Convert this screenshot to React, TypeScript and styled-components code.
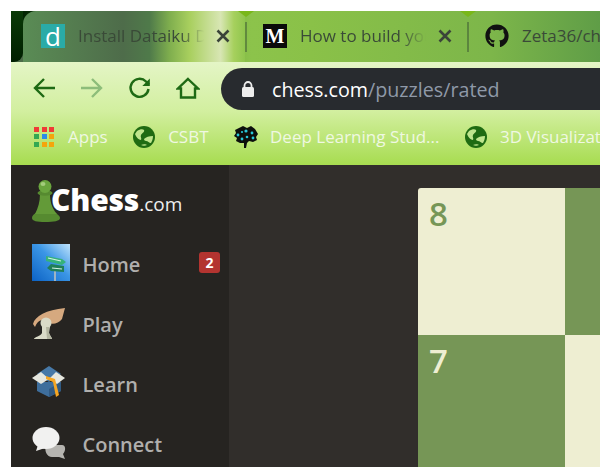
import React, { ReactNode } from 'react';
import styled, { createGlobalStyle } from 'styled-components';
import { FaGithub } from 'react-icons/fa';

const uiFont = `"Open Sans", "Noto Sans", sans-serif`;

const GlobalStyle = createGlobalStyle`
  html, body {
    margin: 0;
    height: 467px;
    overflow: hidden;
    background: #fff;
  }
`;

const Page = styled.div`
  height: 467px;
  box-sizing: border-box;
  padding: 11px 0 0 11px;
  display: flex;
  flex-direction: column;
  overflow: hidden;
  font-family: ${uiFont};
`;

const TabStrip = styled.div`
  height: 51px;
  flex: none;
  display: flex;
  overflow: hidden;
  background: linear-gradient(90deg, #0a3606 0, #022502 12px, #8cc34b 240px, #8ac148 300px, #7db64a 480px, #5f9d47 100%);
`;

const TabEdge = styled.div`
  width: 12px;
  flex: none;
  position: relative;
  background: #4c6b48;

  &::before {
    content: '';
    position: absolute;
    inset: 0;
    background: linear-gradient(180deg, #0a3a07, #001f00);
    border-bottom-right-radius: 9px;
  }
`;

const TabShell = styled.div<{ $active?: boolean; $pad: number }>`
  width: ${(p) => (p.$active ? 222 : 220)}px;
  flex: none;
  box-sizing: border-box;
  padding-left: ${(p) => p.$pad}px;
  display: flex;
  align-items: center;
  border-top-left-radius: ${(p) => (p.$active ? 13 : 0)}px;
  background: ${(p) =>
    p.$active
      ? 'linear-gradient(90deg, #5a8c55 0, #557e50 20%, #4e6c4a 45%, #4f7a4a 57%, #7fae4e 66%, #a8cf5e 75%, #d8e6b4 89%, #a6d05d 95%, #8fc54d 100%)'
      : 'none'};
`;

const TabIconSlot = styled.div`
  width: 24px;
  height: 24px;
  flex: none;
  margin-top: -1px;
`;

const TabLabel = styled.span<{ $fade?: boolean }>`
  width: 126px;
  margin-left: 13px;
  margin-top: -2px;
  flex: none;
  overflow: hidden;
  white-space: nowrap;
  font-size: 17px;
  color: #3a4a38;
  ${(p) => p.$fade && 'mask-image: linear-gradient(90deg, #000 80%, transparent 100%);'}
`;

const CloseIcon = styled.svg`
  width: 14px;
  height: 14px;
  margin-left: 12px;
  flex: none;
  margin-top: -2px;
`;

const TabSeparator = styled.div`
  width: 2px;
  height: 30px;
  margin-top: 11px;
  flex: none;
  position: relative;
  background: rgba(64, 92, 52, 0.55);

  &::before {
    content: '';
    position: absolute;
    top: -11px;
    left: -7px;
    border-left: 8px solid transparent;
    border-right: 8px solid transparent;
    border-top: 6px solid #79b71a;
  }
`;

const DFavicon = styled.div`
  width: 24px;
  height: 24px;
  display: flex;
  align-items: center;
  justify-content: center;
  background: #2aaba7;
  color: #fff;
  font-size: 26px;
  font-weight: 500;
  line-height: 24px;
`;

const MFavicon = styled.div`
  width: 24px;
  height: 24px;
  display: flex;
  align-items: center;
  justify-content: center;
  background: #0a0a0a;
  color: #fff;
  font-family: 'Liberation Serif', serif;
  font-weight: 700;
  font-size: 20px;
`;

const GithubFavicon = styled(FaGithub)`
  width: 24px;
  height: 24px;
  display: block;
  color: #111;
`;

const BrowserBars = styled.div`
  flex: none;
  background: linear-gradient(180deg, #e4f5c6 0, #d2ef9f 48%, #a7dc50 100%);
`;

const Toolbar = styled.div`
  height: 48px;
  box-sizing: border-box;
  padding: 6px 0 0 21px;
  display: flex;
  align-items: center;
  gap: 24px;
`;

const NavSvg = styled.svg<{ $faded?: boolean }>`
  width: 24px;
  height: 24px;
  margin-top: -2px;
  flex: none;
  fill: none;
  stroke: ${(p) => (p.$faded ? '#8dbd7a' : '#1e6a14')};
  stroke-width: 2.4;
`;

const Omnibox = styled.div`
  flex: 1;
  height: 42px;
  margin-left: -3px;
  padding-left: 20px;
  display: flex;
  align-items: center;
  background: #282b2f;
  border-radius: 21px 0 0 21px;
  font-size: 19.7px;
  white-space: nowrap;
`;

const LockIcon = styled.svg`
  width: 14px;
  height: 18px;
  margin-right: 17px;
  flex: none;
`;

const Host = styled.span`
  color: #fff;
`;

const UrlPath = styled.span`
  color: #8f99a8;
`;

const BookmarksBar = styled.div`
  height: 53px;
  padding: 0 0 2px 23px;
  display: flex;
  align-items: center;
  gap: 25.5px;
  white-space: nowrap;
  overflow: hidden;
`;

const Bookmark = styled.div<{ $gap: number }>`
  display: flex;
  align-items: center;
  gap: ${(p) => p.$gap}px;
  flex: none;
  font-size: 17px;
  line-height: 22px;
  color: #eff8e2;
`;

const AppsGrid = styled.div`
  width: 20px;
  display: grid;
  grid-template-columns: repeat(3, 5px);
  gap: 2.5px;
`;

const AppsDot = styled.span<{ $color: string }>`
  width: 5px;
  height: 5px;
  background: ${(p) => p.$color};
`;

const Body = styled.div`
  flex: 1;
  min-height: 0;
  display: flex;
`;

const Sidebar = styled.nav`
  width: 218px;
  flex: none;
  background: #262421;
`;

const Logo = styled.div`
  height: 70px;
  box-sizing: border-box;
  padding: 15px 0 0 21px;
  display: flex;
  align-items: flex-start;
`;

const Pawn = styled.svg`
  width: 28px;
  height: 42px;
  flex: none;
`;

const LogoText = styled.div`
  margin: 1px 0 0 -9px;
  font-size: 30px;
  font-weight: 800;
  line-height: 38px;
  letter-spacing: -0.2px;
  color: #fff;
`;

const LogoSuffix = styled.span`
  font-size: 19px;
  font-weight: 400;
  letter-spacing: 0;
  color: #eee;
`;

const NavRow = styled.div`
  height: 60px;
  padding-left: 21px;
  display: flex;
  align-items: center;
`;

const NavIcon = styled.svg`
  width: 38px;
  height: 38px;
  margin-bottom: 5px;
  flex: none;
`;

const NavLabel = styled.span`
  margin: -2px 0 0 12.5px;
  font-size: 20px;
  font-weight: 600;
  color: #b0afad;
`;

const Badge = styled.span`
  width: 21px;
  height: 21px;
  margin: 0 9px 5px auto;
  display: flex;
  align-items: center;
  justify-content: center;
  border-radius: 3px;
  background: #b33430;
  color: #fff;
  font-size: 14px;
  font-weight: 700;
`;

const Main = styled.main`
  flex: 1;
  min-width: 0;
  overflow: hidden;
  padding: 23px 0 0 189px;
  background: #312e2b;
`;

const Board = styled.div`
  width: 1176px;
  display: grid;
  grid-template-columns: repeat(8, 147px);
  grid-auto-rows: 147px;
  border-top-left-radius: 3px;
  overflow: hidden;
`;

const Square = styled.div<{ $dark: boolean }>`
  box-sizing: border-box;
  padding: 4px 0 0 11px;
  font-size: 33px;
  font-weight: 600;
  line-height: 44px;
  background: ${(p) => (p.$dark ? '#769656' : '#eeeed2')};
  color: ${(p) => (p.$dark ? '#eeeed2' : '#769656')};
`;

const Close = () => (
  <CloseIcon viewBox="0 0 14 14">
    <path d="M1.5 1.5 12.5 12.5M12.5 1.5 1.5 12.5" stroke="#3b4439" strokeWidth="2.6" />
  </CloseIcon>
);

const Globe = () => (
  <svg width="22" height="22" viewBox="0 0 22 22">
    <circle cx="11" cy="11" r="11" fill="#1f6b12" />
    <path d="M4 5C7 3 10 3 11 4 12 6 9 7 8 9 7 11 9 12 8 14 6 14 3 11 2 8ZM11 13C13 11 16 10 20 10 20 13 19 15 18 17 16 17 15 15 13 15 12 15 11 14 11 13ZM8 19C10 18 13 18 14 19 12 20 10 20 8 19Z" fill="#bfe58d" />
  </svg>
);

const Brain = () => (
  <svg width="24" height="24" viewBox="0 0 24 24">
    <path d="M5 3 9 1 13 3 17 1 21 4 24 9 22 12 23 15 19 17 15 16 13 18 12 23 10 23 10 18 6 18 2 16 3 13 0 11 2 8 1 5Z" fill="#0c0f0c" />
    <g fill="#28c6d8">
      <circle cx="4" cy="10" r="1.4" />
      <circle cx="8" cy="14" r="1.4" />
      <circle cx="12" cy="6" r="1.6" />
      <circle cx="13" cy="12" r="1.3" />
      <circle cx="18" cy="8" r="1.4" />
      <circle cx="19" cy="13" r="1.4" />
      <circle cx="8" cy="7" r="1.100" />
    </g>
  </svg>
);

const HomeIcon = () => (
  <NavIcon viewBox="0 0 38 38">
    <defs>
      <linearGradient id="sky" x1="0" y1="1" x2="1" y2="0">
        <stop offset="0" stopColor="#0c62c4" />
        <stop offset="0.55" stopColor="#3b96e6" />
        <stop offset="1" stopColor="#bfe3fb" />
      </linearGradient>
    </defs>
    <rect width="38" height="37" fill="url(#sky)" />
    <rect x="22" y="24" width="2" height="13" fill="#9db4c4" />
    <path d="M14 12 30 15 34 18 30 21 14 17Z" fill="#35b27a" />
    <path d="M16 14 29 17" stroke="#d5f2e3" strokeWidth="1.2" />
    <path d="M15 24 19 20 32 22 32 28 19 27Z" fill="#1f7f58" />
    <path d="M20 24 30 25" stroke="#d5f2e3" strokeWidth="1.2" />
  </NavIcon>
);

const PlayIcon = () => (
  <NavIcon viewBox="0 -2 38 38">
    <path d="M1 18C3 10 14 4 33 2L30 13C27 17 21 19 17 17 12 12 6 13 3 21Z" fill="#d6a97f" />
    <circle cx="14" cy="17" r="5.500" fill="#d9dac7" />
    <path d="M10 20H18L17 27C18 30 20 31 20 33H2C2 31 9 30 10 27Z" fill="#d9dac7" />
    <path d="M14 21 17 21 17 27 20 33H15Z" fill="#b3b5a0" />
  </NavIcon>
);

const LearnIcon = () => (
  <NavIcon viewBox="0 -2 38 38">
    <path d="M5 16V25L17 31 29 25V16Z" fill="#3e6e9c" />
    <path d="M17 31V23L29 16V25Z" fill="#315a82" />
    <path d="M17 0 29 8 17 16 5 8Z" fill="#4779a8" />
    <path d="M0 12 9 6 17 13 9 18Z" fill="#e6e7df" />
    <path d="M33 12 24 6 17 13 25 18Z" fill="#e6e7df" />
    <path d="M14 10 23 13 27 29 24 31 21 16 14 13Z" fill="#f5a623" />
  </NavIcon>
);

const ConnectIcon = () => (
  <NavIcon viewBox="0 -3 38 38">
    <path d="M14 18H30C34 18 34 24 31 27L33 32 27 30H20C15 30 12 24 14 18Z" fill="#b5b4b0" />
    <ellipse cx="14" cy="11" rx="13.500" ry="11" fill="#f1f1f0" />
    <path d="M6 18 4 24 13 21Z" fill="#f1f1f0" />
  </NavIcon>
);

const appsColors = ['#ef3b36', '#ef3b36', '#ef3b36', '#33a852', '#2a8be8', '#f5a50b', '#33a852', '#f5a50b', '#f5a50b'];

const navItems: { label: string; icon: ReactNode; badge?: number }[] = [
  { label: 'Home', icon: <HomeIcon />, badge: 2 },
  { label: 'Play', icon: <PlayIcon /> },
  { label: 'Learn', icon: <LearnIcon /> },
  { label: 'Connect', icon: <ConnectIcon /> },
];

const ranks = [8, 7, 6, 5, 4, 3, 2, 1];

const App = () => (
  <>
    <GlobalStyle />
    <Page>
      <TabStrip>
        <TabEdge />
        <TabShell $active $pad={18}>
          <TabIconSlot>
            <DFavicon>d</DFavicon>
          </TabIconSlot>
          <TabLabel $fade>Install Dataiku DSS</TabLabel>
          <Close />
        </TabShell>
        <TabSeparator />
        <TabShell $pad={16}>
          <TabIconSlot>
            <MFavicon>M</MFavicon>
          </TabIconSlot>
          <TabLabel $fade>How to build your own</TabLabel>
          <Close />
        </TabShell>
        <TabSeparator />
        <TabShell $pad={16}>
          <TabIconSlot>
            <GithubFavicon />
          </TabIconSlot>
          <TabLabel>Zeta36/chess</TabLabel>
        </TabShell>
      </TabStrip>

      <BrowserBars>
        <Toolbar>
          <NavSvg viewBox="0 0 24 24">
            <path d="M23 12H3M12 3 3 12 12 21" />
          </NavSvg>
          <NavSvg viewBox="0 0 24 24" $faded>
            <path d="M1 12H21M12 3 21 12 12 21" />
          </NavSvg>
          <NavSvg viewBox="0 0 24 24">
            <path d="M20.500 13A9 9 0 1 1 18 5.500L21 8.500" />
            <path d="M21.800 2.500V10H14.300Z" fill="#1e6a14" stroke="none" />
          </NavSvg>
          <NavSvg viewBox="0 0 24 24">
            <path d="M12 3 22 12.500H19V21.500H5V12.500H2Z" />
          </NavSvg>
          <Omnibox>
            <LockIcon viewBox="0 0 14 18">
              <path d="M3.500 8V5.500A3.500 3.500 0 0 1 10.500 5.500V8" fill="none" stroke="#ededed" strokeWidth="1.800" />
              <rect x="1" y="7" width="12" height="10" rx="1.500" fill="#ededed" />
            </LockIcon>
            <Host>chess.com</Host>
            <UrlPath>/puzzles/rated</UrlPath>
          </Omnibox>
        </Toolbar>
        <BookmarksBar>
          <Bookmark $gap={14}>
            <AppsGrid>
              {appsColors.map((color, i) => (
                <AppsDot key={i} $color={color} />
              ))}
            </AppsGrid>
            Apps
          </Bookmark>
          <Bookmark $gap={13}>
            <Globe />
            CSBT
          </Bookmark>
          <Bookmark $gap={12}>
            <Brain />
            Deep Learning Stud...
          </Bookmark>
          <Bookmark $gap={13}>
            <Globe />
            3D Visualization
          </Bookmark>
        </BookmarksBar>
      </BrowserBars>

      <Body>
        <Sidebar>
          <Logo>
            <Pawn viewBox="0 0 28 42">
              <path d="M0 38C0 34 6 31 14 31 22 31 28 35 28 38 28 41 22 42 13 42 5 42 0 41 0 38Z" fill="#568a30" />
              <path d="M8 14C8 22 6 28 3 34L25 34C19 27 18 20 18 14Z" fill="#639a38" />
              <ellipse cx="13" cy="13" rx="7.500" ry="2.800" fill="#568a30" />
              <circle cx="13" cy="6.500" r="6.500" fill="#6aa53e" />
              <ellipse cx="11" cy="4" rx="2.500" ry="2" fill="#a3cc7c" />
            </Pawn>
            <LogoText>
              Chess<LogoSuffix>.com</LogoSuffix>
            </LogoText>
          </Logo>
          {navItems.map(({ label, icon, badge }) => (
            <NavRow key={label}>
              {icon}
              <NavLabel>{label}</NavLabel>
              {badge && <Badge>{badge}</Badge>}
            </NavRow>
          ))}
        </Sidebar>
        <Main>
          <Board>
            {ranks.map((rank, r) =>
              ranks.map((_, c) => (
                <Square key={`${r}-${c}`} $dark={(r + c) % 2 === 1}>
                  {c === 0 ? rank : null}
                </Square>
              )),
            )}
          </Board>
        </Main>
      </Body>
    </Page>
  </>
);

export default App;
